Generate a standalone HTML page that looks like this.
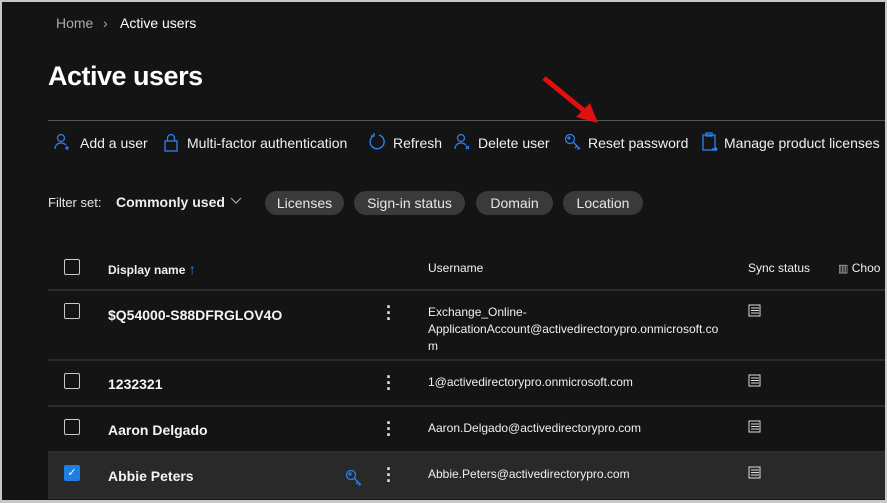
<!DOCTYPE html>
<html><head><style>
*{margin:0;padding:0;box-sizing:border-box}
html,body{width:887px;height:503px;overflow:hidden;background:#c8c8c8}
#f{position:absolute;left:2px;top:2px;width:883px;height:498px;background:#141414;overflow:hidden;font-family:"Liberation Sans",sans-serif;color:#fff}
.a{position:absolute;white-space:nowrap}
.bc{top:13px;font-size:14px}
h1{position:absolute;left:46px;top:59px;font-size:27px;font-weight:bold;letter-spacing:-0.5px}
.tb{top:133px;font-size:14px;color:#f0f0f0}
.pill{position:absolute;top:189px;height:24px;border-radius:12px;background:#3a3a3a;font-size:14px;color:#e6e6e6;line-height:24px;text-align:center}
.hd{font-size:12px;color:#f0f0f0}
.sep{position:absolute;left:46px;right:0;height:2px;background:#2c2c2c}
.cb{position:absolute;left:62px;width:16px;height:16px;border:1.5px solid #c8c8c8;border-radius:2px}
.nm{font-size:14px;font-weight:bold;color:#f4f4f4}
.un{font-size:12px;color:#f0f0f0;line-height:17px}
.dots{font-size:18px;font-weight:bold;color:#ddd}
.ic{position:absolute}
</style></head><body><div id="f">
<div class="a bc" style="left:54px;color:#aaa">Home</div>
<div class="a bc" style="left:101px;color:#aaa">›</div>
<div class="a bc" style="left:118px">Active users</div>
<h1>Active users</h1>
<div style="position:absolute;left:46px;right:0;top:118px;height:1px;background:#555"></div>
<svg class="ic" style="left:52px;top:131px" width="18" height="18" viewBox="0 0 18 18" fill="none" stroke="#2d7ff0" stroke-width="1.3"><circle cx="7" cy="5" r="3.5"/><path d="M1 16c0-4 3-6 6-6s4 1 5 2"/><path d="M13 13v4M11 15h4"/></svg>
<div class="a tb" style="left:78px">Add a user</div>
<svg class="ic" style="left:161px;top:130px" width="16" height="20" viewBox="0 0 16 20" fill="none" stroke="#2d7ff0" stroke-width="1.3"><rect x="2" y="9" width="12" height="10"/><path d="M4.5 9V6a3.5 3.5 0 0 1 7 0v3"/></svg>
<div class="a tb" style="left:185px">Multi-factor authentication</div>
<svg class="ic" style="left:366px;top:131px" width="18" height="18" viewBox="0 0 18 18" fill="none" stroke="#2d7ff0" stroke-width="1.4"><path d="M6 2.5A7 7 0 1 0 11 2"/><path d="M6 0v3h-3"/></svg>
<div class="a tb" style="left:391px">Refresh</div>
<svg class="ic" style="left:452px;top:131px" width="18" height="18" viewBox="0 0 18 18" fill="none" stroke="#2d7ff0" stroke-width="1.3"><circle cx="7" cy="5" r="3.5"/><path d="M1 16c0-4 3-6 6-6s4 1 5 2"/><path d="M12 13l3 3M15 13l-3 3"/></svg>
<div class="a tb" style="left:476px">Delete user</div>
<svg class="ic" style="left:562px;top:131px" width="18" height="18" viewBox="0 0 18 18" fill="none" stroke="#2d7ff0" stroke-width="1.3"><circle cx="6" cy="6" r="4.5"/><circle cx="5" cy="5" r="1"/><path d="M9 9l7 7M13 13l-2 2M15 15l-1.5 1.5"/></svg>
<div class="a tb" style="left:586px">Reset password</div>
<svg class="ic" style="left:699px;top:130px" width="18" height="20" viewBox="0 0 18 20" fill="none" stroke="#2d7ff0" stroke-width="1.3"><rect x="2" y="3" width="12" height="15"/><rect x="5" y="1" width="6" height="3"/><path d="M11 17h5M14 15l2 2-2 2"/></svg>
<div class="a tb" style="left:722px">Manage product licenses</div>
<svg class="ic" style="left:538px;top:72px" width="64" height="56" viewBox="0 0 64 56"><path d="M4 4L48 40" stroke="#e01010" stroke-width="5"/><path d="M58 49L36 43L50 29Z" fill="#e01010"/></svg>
<div class="a" style="left:46px;top:193px;font-size:13px;color:#e6e6e6">Filter set:</div>
<div class="a" style="left:114px;top:192px;font-size:14px;font-weight:bold;color:#eee">Commonly used</div>
<svg class="ic" style="left:228px;top:195px" width="12" height="8" viewBox="0 0 12 8" fill="none" stroke="#aaa" stroke-width="1.2"><path d="M1 1l5 5 5-5"/></svg>
<div class="pill" style="left:263px;width:79px">Licenses</div>
<div class="pill" style="left:352px;width:111px">Sign-in status</div>
<div class="pill" style="left:474px;width:77px">Domain</div>
<div class="pill" style="left:561px;width:80px">Location</div>
<div class="cb" style="top:257px"></div>
<div class="a hd" style="left:106px;top:259px;font-weight:bold">Display name <span style="color:#2d7ff0;font-weight:normal;font-size:14px">↑</span></div>
<div class="a hd" style="left:426px;top:259px">Username</div>
<div class="a hd" style="left:746px;top:259px">Sync status</div>
<div class="a hd" style="left:836px;top:259px"><span style="font-size:11px;color:#bbb">▥</span> Choo</div>
<div class="sep" style="top:287px"></div>
<div class="cb" style="top:301px"></div>
<div class="a nm" style="left:106px;top:305px">$Q54000-S88DFRGLOV4O</div>
<div class="a dots" style="left:384px;top:302px;line-height:6px">·<br>·<br>·</div>
<div class="a un" style="left:426px;top:302px">Exchange_Online-<br>ApplicationAccount@activedirectorypro.onmicrosoft.co<br>m</div>
<div class="sep" style="top:357px"></div>
<div class="cb" style="top:371px"></div>
<div class="a nm" style="left:106px;top:374px">1232321</div>
<div class="a dots" style="left:384px;top:372px;line-height:6px">·<br>·<br>·</div>
<div class="a un" style="left:426px;top:372px">1@activedirectorypro.onmicrosoft.com</div>
<div class="sep" style="top:403px"></div>
<div class="cb" style="top:417px"></div>
<div class="a nm" style="left:106px;top:420px">Aaron Delgado</div>
<div class="a dots" style="left:384px;top:418px;line-height:6px">·<br>·<br>·</div>
<div class="a un" style="left:426px;top:418px">Aaron.Delgado@activedirectorypro.com</div>
<div class="sep" style="top:449px"></div>
<div style="position:absolute;left:46px;right:0;top:451px;height:44px;background:#292929"></div>
<div class="a" style="left:62px;top:463px;width:16px;height:16px;background:#1f7fe0;border-radius:2px;color:#fff;font-size:11px;text-align:center;line-height:16px">✓</div>
<div class="a nm" style="left:106px;top:466px">Abbie Peters</div>
<svg class="ic" style="left:343px;top:467px" width="18" height="18" viewBox="0 0 18 18" fill="none" stroke="#2d7ff0" stroke-width="1.3"><circle cx="6" cy="6" r="4.5"/><circle cx="5" cy="5" r="1"/><path d="M9 9l7 7M13 13l-2 2M15 15l-1.5 1.5"/></svg>
<div class="a dots" style="left:384px;top:464px;line-height:6px">·<br>·<br>·</div>
<div class="a un" style="left:426px;top:464px">Abbie.Peters@activedirectorypro.com</div>
<div class="sep" style="top:495px"></div>
<svg class="ic" style="left:746px;top:302px" width="13" height="13"><rect x="1" y="1" width="11" height="11" fill="none" stroke="#ddd"/><path d="M3 4h8M3 6.5h8M3 9h8" stroke="#ddd"/></svg>
<svg class="ic" style="left:746px;top:372px" width="13" height="13"><rect x="1" y="1" width="11" height="11" fill="none" stroke="#ddd"/><path d="M3 4h8M3 6.5h8M3 9h8" stroke="#ddd"/></svg>
<svg class="ic" style="left:746px;top:418px" width="13" height="13"><rect x="1" y="1" width="11" height="11" fill="none" stroke="#ddd"/><path d="M3 4h8M3 6.5h8M3 9h8" stroke="#ddd"/></svg>
<svg class="ic" style="left:746px;top:464px" width="13" height="13"><rect x="1" y="1" width="11" height="11" fill="none" stroke="#ddd"/><path d="M3 4h8M3 6.5h8M3 9h8" stroke="#ddd"/></svg>
</div></body></html>
